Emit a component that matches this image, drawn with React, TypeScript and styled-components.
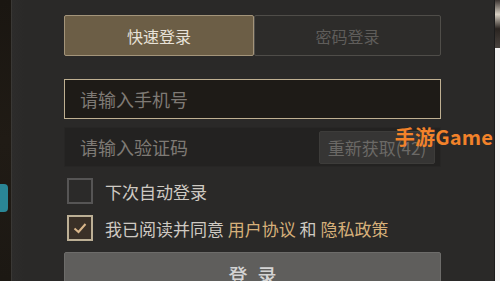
import styled, { createGlobalStyle } from "styled-components";

const Global = createGlobalStyle`
    html, body {
        margin: 0;
        padding: 0;
        background: #2a2928;
        font-family: "Noto Sans CJK SC", "Noto Sans", sans-serif;
    }
`

const Screen = styled.div`
    display: flex;
    width: 500px;
    height: 281px;
    overflow: hidden;
`

const LeftArt = styled.div`
    position: relative;
    width: 11px;
    flex-shrink: 0;
    background: linear-gradient(180deg, #1a1611 0%, #201b15 50%, #1c1813 100%);
    border-right: 1px solid #3a3835;
`

const TealBlob = styled.div`
    position: absolute;
    left: 0;
    top: 184px;
    width: 8px;
    height: 28px;
    border-radius: 0 4px 4px 0;
    background: #2a8696;
`

const RightArt = styled.div`
    width: 5px;
    flex-shrink: 0;
    display: flex;
    flex-direction: column;
    background: #f3f3f3;
`

const RightPhoto = styled.div`
    height: 48px;
    background: linear-gradient(180deg, #3a3330 0%, #d8d0c4 30%, #2a2420 60%, #4a4440 100%);
`

const Panel = styled.div`
    position: relative;
    flex: 1;
    display: flex;
    flex-direction: column;
    padding: 15px 53px 0 52px;
    background: linear-gradient(90deg, #2d2c2b 0px, #2a2928 12px);
    border-right: 1px solid #1c1c1c;
    & > * {
        flex-shrink: 0;
    }
`

const Tabs = styled.div`
    display: flex;
    height: 41px;
`

const Tab = styled.div<{ $active?: boolean }>`
    flex: ${p => (p.$active ? "0 0 190px" : "1")};
    display: flex;
    align-items: center;
    justify-content: center;
    font-size: 16px;
    box-sizing: border-box;
    color: ${p => (p.$active ? "#e8e2d8" : "#5f5d5a")};
    background: ${p => (p.$active ? "#6c5e46" : "#2d2c2a")};
    border: 1.5px solid ${p => (p.$active ? "#a3947a" : "#4f4d49")};
    border-radius: 2px;
`

const Field = styled.div<{ $focus?: boolean }>`
    margin-top: ${p => (p.$focus ? "23px" : "8px")};
    height: 40px;
    box-sizing: border-box;
    display: flex;
    align-items: center;
    padding: 0 5px 0 15px;
    background: ${p => (p.$focus ? "#1e1b17" : "#232221")};
    border: 1.5px solid ${p => (p.$focus ? "#bfb092" : "#272625")};
`

const Placeholder = styled.span`
    flex: 1;
    font-size: 18px;
    color: #7e7a75;
`

const CodeButton = styled.div`
    height: 31px;
    width: 114px;
    display: flex;
    align-items: center;
    justify-content: center;
    font-size: 17px;
    color: #6b6966;
    background: #363534;
    border: 1px solid #3d3c3a;
    border-radius: 2px;
`

const Watermark = styled.div`
    position: absolute;
    right: 1px;
    top: 122px;
    font-size: 20px;
    font-weight: 700;
    color: #f2822a;
    letter-spacing: 0.2px;
`

const CheckRow = styled.div<{ $first?: boolean }>`
    display: flex;
    align-items: center;
    gap: 12px;
    height: 26px;
    margin-top: ${p => (p.$first ? "11px" : "11px")};
    padding-left: 3px;
    font-size: 17px;
    color: #cfcac3;
`

const Box = styled.div<{ $checked?: boolean }>`
    width: 26px;
    height: 26px;
    box-sizing: border-box;
    display: flex;
    align-items: center;
    justify-content: center;
    border: 2px solid ${p => (p.$checked ? "#bcaf95" : "#565555")};
    background: ${p => (p.$checked ? "#3a3027" : "#2b2a29")};
`

const Link = styled.span`
    color: #d6b07a;
`

const LoginButton = styled.div`
    margin-top: 11px;
    height: 42px;
    display: flex;
    align-items: center;
    justify-content: center;
    gap: 10px;
    font-size: 19px;
    font-weight: 500;
    color: #d4d4d4;
    background: #5f5e5c;
    border: 1px solid #6d6c6a;
    border-radius: 2px;
`

const App = (): JSX.Element => {
    return (
        <>
            <Global />
            <Screen>
                <LeftArt>
                    <TealBlob />
                </LeftArt>
                <Panel>
                    <Tabs>
                        <Tab $active>快速登录</Tab>
                        <Tab>密码登录</Tab>
                    </Tabs>
                    <Field $focus>
                        <Placeholder>请输入手机号</Placeholder>
                    </Field>
                    <Field>
                        <Placeholder>请输入验证码</Placeholder>
                        <CodeButton>重新获取(42)</CodeButton>
                    </Field>
                    <CheckRow $first>
                        <Box />
                        下次自动登录
                    </CheckRow>
                    <CheckRow>
                        <Box $checked>
                            <svg width="16" height="16" viewBox="0 0 16 16">
                                <polyline points="2.5,8.5 6.5,12 13.5,4" fill="none" stroke="#d9b68a" strokeWidth="2" />
                            </svg>
                        </Box>
                        <span>
                            我已阅读并同意 <Link>用户协议</Link> 和 <Link>隐私政策</Link>
                        </span>
                    </CheckRow>
                    <LoginButton>
                        <span>登</span>
                        <span>录</span>
                    </LoginButton>
                    <Watermark>手游Game</Watermark>
                </Panel>
                <RightArt>
                    <RightPhoto />
                </RightArt>
            </Screen>
        </>
    )
}

export default App;
